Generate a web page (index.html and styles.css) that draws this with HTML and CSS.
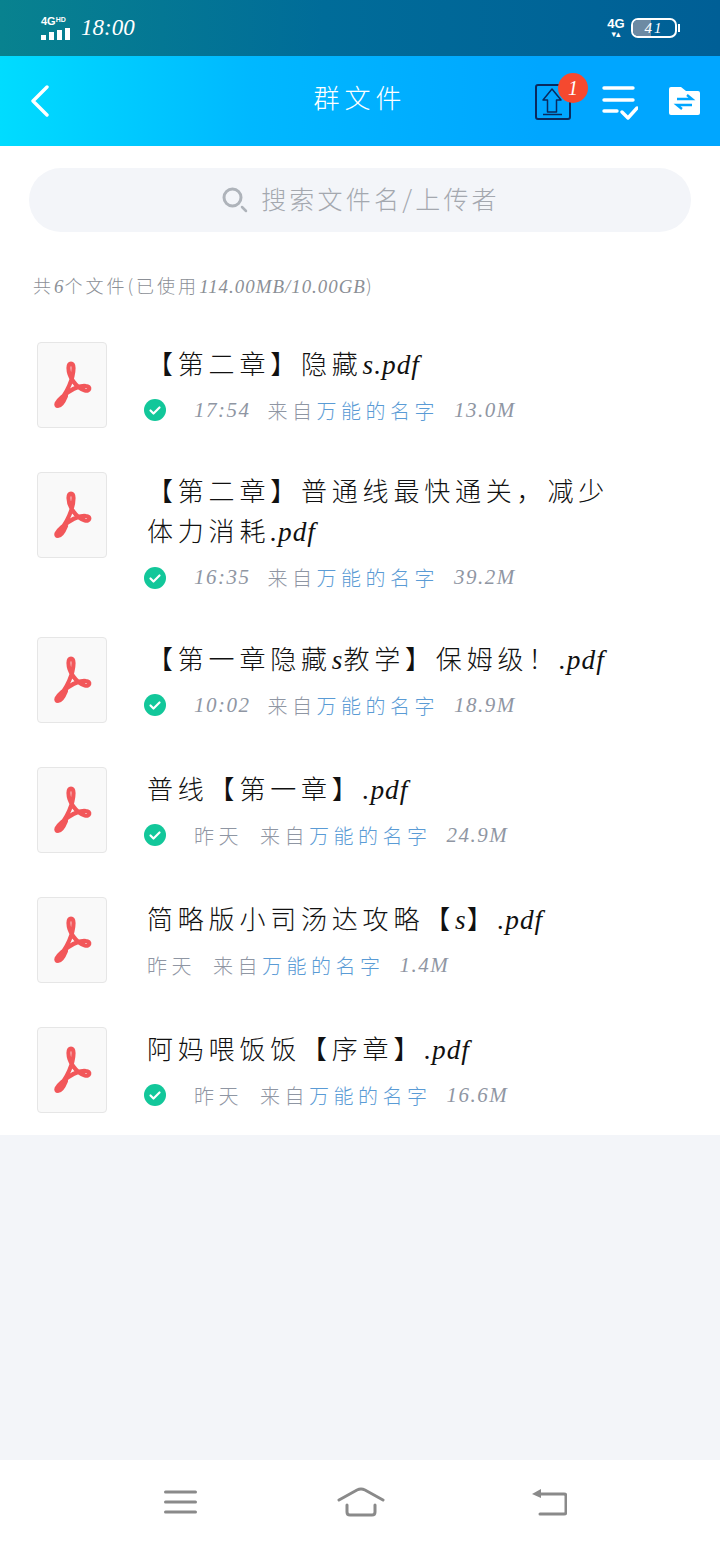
FILE: index.html
```html
<!DOCTYPE html>
<html lang="zh-CN">
<head>
    <meta charset="UTF-8">
    <meta name="viewport" content="width=device-width, initial-scale=1.0">
    <title>群文件</title>
    <link rel="stylesheet" href="styles.css">
</head>
<body>
    <svg class="defs" width="0" height="0">
        <symbol id="pdf" viewBox="0 0 40 50">
            <path d="M16.500 8C16.500 2 21.500 2 21.500 8C21.500 18 15 34 6 42M16.500 8C16.500 16 23 27 33 30.500C38 32 39 26 34 26C27 25 17 31 10 37C4 42 3 46 6 46C9 46 12 41 14 36" fill="none" stroke="#f2575a" stroke-width="4.200" stroke-linecap="round" stroke-linejoin="round"/>
        </symbol>
        <symbol id="ok" viewBox="0 0 22 22">
            <circle cx="11" cy="11" r="11" fill="#12c79a"/>
            <path d="M6.500 11.500l3 3 6-6" fill="none" stroke="#fff" stroke-width="2.200" stroke-linecap="round" stroke-linejoin="round"/>
        </symbol>
    </svg>

    <div class="status-bar">
        <div class="status-left">
            <div class="signal">
                <div class="net">4G<sup>HD</sup></div>
                <div class="bars"><i class="b1"></i><i class="b2"></i><i class="b3"></i><i class="b4"></i></div>
            </div>
            <span class="clock">18:00</span>
        </div>
        <div class="status-right">
            <div class="net-right">4G<span>▾▴</span></div>
            <div class="battery"><div class="level"></div><span>41</span></div>
            <div class="battery-tip"></div>
        </div>
    </div>

    <header class="topbar">
        <svg class="back" width="20" height="32" viewBox="0 0 20 32">
            <path d="M17 2L3 16l14 14" fill="none" stroke="#fff" stroke-width="3.400" stroke-linecap="round" stroke-linejoin="round"/>
        </svg>
        <h1>群文件</h1>
        <div class="actions">
            <div class="upload">
                <svg width="36" height="36" viewBox="0 0 36 36">
                    <rect x="1" y="1" width="34" height="34" rx="2" fill="none" stroke="#0a2a5e" stroke-width="2"/>
                    <path d="M17 5L8 16h4.500v12h9V16H26z" fill="none" stroke="#0a2a5e" stroke-width="1.500" stroke-linejoin="round"/>
                    <path d="M8 30.500h19" stroke="#0a2a5e" stroke-width="1.500"/>
                </svg>
                <span class="badge">1</span>
            </div>
            <svg class="todo" width="36" height="34" viewBox="0 0 36 34">
                <path d="M2 2h29M2 14h29M2 25h13" stroke="#fff" stroke-width="3.400" stroke-linecap="round"/>
                <path d="M20 26l6 6 9-10" fill="none" stroke="#fff" stroke-width="3.400" stroke-linecap="round" stroke-linejoin="round"/>
            </svg>
            <svg width="31" height="28" viewBox="0 0 31 28">
                <path d="M0 2a2 2 0 012-2h10l5 4h12a2 2 0 012 2v20a2 2 0 01-2 2H2a2 2 0 01-2-2z" fill="#fff"/>
                <path d="M8 12h15l-5-4M23 18H8l5 4" fill="none" stroke="#00a6ff" stroke-width="2.400"/>
            </svg>
        </div>
    </header>

    <main class="panel">
        <div class="search">
            <svg width="26" height="26" viewBox="0 0 26 26">
                <circle cx="10.500" cy="10.500" r="8.500" fill="none" stroke="#aeb3ba" stroke-width="3"/>
                <path d="M20 20l4 4" stroke="#aeb3ba" stroke-width="2.500" stroke-linecap="round"/>
            </svg>
            <span>搜索文件名/上传者</span>
        </div>
        <p class="count">共<span class="en">6</span>个文件(已使用<span class="en">114.00MB/10.00GB</span>)</p>

        <ul class="files">
            <li class="file">
                <div class="thumb"><svg width="40" height="50"><use href="#pdf"/></svg></div>
                <div class="info">
                    <div class="name">【第二章】隐藏<span class="en">s.pdf</span></div>
                    <div class="meta"><svg class="ok" width="22" height="22"><use href="#ok"/></svg><span class="when">17:54</span><span class="from">来自<b>万能的名字</b></span><span class="size">13.0M</span></div>
                </div>
            </li>
            <li class="file">
                <div class="thumb"><svg width="40" height="50"><use href="#pdf"/></svg></div>
                <div class="info">
                    <div class="name">【第二章】普通线最快通关，减少<br>体力消耗<span class="en">.pdf</span></div>
                    <div class="meta"><svg class="ok" width="22" height="22"><use href="#ok"/></svg><span class="when">16:35</span><span class="from">来自<b>万能的名字</b></span><span class="size">39.2M</span></div>
                </div>
            </li>
            <li class="file">
                <div class="thumb"><svg width="40" height="50"><use href="#pdf"/></svg></div>
                <div class="info">
                    <div class="name">【第一章隐藏<span class="en">s</span>教学】保姆级！<span class="en">.pdf</span></div>
                    <div class="meta"><svg class="ok" width="22" height="22"><use href="#ok"/></svg><span class="when">10:02</span><span class="from">来自<b>万能的名字</b></span><span class="size">18.9M</span></div>
                </div>
            </li>
            <li class="file">
                <div class="thumb"><svg width="40" height="50"><use href="#pdf"/></svg></div>
                <div class="info">
                    <div class="name">普线【第一章】<span class="en">.pdf</span></div>
                    <div class="meta"><svg class="ok" width="22" height="22"><use href="#ok"/></svg><span class="when cn">昨天</span><span class="from">来自<b>万能的名字</b></span><span class="size">24.9M</span></div>
                </div>
            </li>
            <li class="file">
                <div class="thumb"><svg width="40" height="50"><use href="#pdf"/></svg></div>
                <div class="info">
                    <div class="name">简略版小司汤达攻略【<span class="en">s</span>】<span class="en">.pdf</span></div>
                    <div class="meta"><span class="when cn">昨天</span><span class="from">来自<b>万能的名字</b></span><span class="size">1.4M</span></div>
                </div>
            </li>
            <li class="file">
                <div class="thumb"><svg width="40" height="50"><use href="#pdf"/></svg></div>
                <div class="info">
                    <div class="name">阿妈喂饭饭【序章】<span class="en">.pdf</span></div>
                    <div class="meta"><svg class="ok" width="22" height="22"><use href="#ok"/></svg><span class="when cn">昨天</span><span class="from">来自<b>万能的名字</b></span><span class="size">16.6M</span></div>
                </div>
            </li>
        </ul>
    </main>

    <div class="spacer"></div>

    <nav class="navbar">
        <svg width="33" height="24" viewBox="0 0 33 24">
            <path d="M1.500 2h30M1.500 12h30M1.500 22h30" stroke="#8a8a8a" stroke-width="3" stroke-linecap="round"/>
        </svg>
        <svg class="nav-home" width="48" height="30" viewBox="0 0 48 30">
            <path d="M2 13L20 3q4-2 8 0L46 13" fill="none" stroke="#8a8a8a" stroke-width="3" stroke-linecap="round"/>
            <path d="M10 18v7q0 3 3 3h22q3 0 3-3v-7" fill="none" stroke="#8a8a8a" stroke-width="3" stroke-linecap="round"/>
        </svg>
        <svg width="35" height="28" viewBox="0 0 35 28">
            <path d="M7 6h25q2 0 2 2v16q0 2-2 2H8" fill="none" stroke="#8a8a8a" stroke-width="3" stroke-linecap="round"/>
            <path d="M0 6l9-5v9z" fill="#8a8a8a"/>
        </svg>
    </nav>
</body>
</html>
```

FILE: styles.css
```css
* {
    box-sizing: border-box;
}
body {
    display: flex;
    flex-direction: column;
    width: 720px;
    height: 1544px;
    margin: 0;
    background-color: #f3f5f9;
    font-family: "Noto Sans CJK SC", "Noto Sans", sans-serif;
    font-weight: 300;
    overflow: hidden;
}
.defs {
    position: absolute;
}
.en {
    font-family: "Liberation Serif", serif;
    font-size: 1.05em;
    font-style: italic;
    line-height: 0;
    letter-spacing: 1px;
}

/* status bar */
.status-bar {
    display: flex;
    align-items: center;
    justify-content: space-between;
    height: 56px;
    padding: 0 40px 0 41px;
    background: linear-gradient(90deg, #08828f 0%, #006c99 45%, #005f96 100%);
    color: #fff;
}
.status-left {
    display: flex;
    align-items: center;
    gap: 11px;
}
.net {
    height: 11px;
    font: bold 11px/11px "Liberation Sans", sans-serif;
}
.net sup {
    font-size: 7px;
    line-height: 0;
    vertical-align: 3px;
}
.bars {
    display: flex;
    align-items: flex-end;
    gap: 3px;
    height: 12px;
    margin-top: 1px;
}
.bars i {
    display: block;
    width: 5px;
    background-color: #fff;
}
.b1 { height: 5px; }
.b2 { height: 8px; }
.b3 { height: 10px; }
.b4 { height: 12px; }
.clock {
    font: italic 23px "Liberation Serif", serif;
}
.status-right {
    display: flex;
    align-items: center;
}
.net-right {
    width: 18px;
    margin-right: 6px;
    font: bold 13px/12px "Liberation Sans", sans-serif;
    text-align: center;
}
.net-right span {
    display: block;
    font-family: "DejaVu Sans", sans-serif;
    font-size: 9px;
    line-height: 8px;
}
.battery {
    position: relative;
    width: 46px;
    height: 20px;
    border: 2px solid #fff;
    border-radius: 7px;
    overflow: hidden;
    font: italic 15px/16px "Liberation Serif", serif;
    text-align: center;
}
.battery .level {
    position: absolute;
    top: 0;
    left: 0;
    bottom: 0;
    width: 18px;
    background-color: #6d8aa3;
}
.battery span {
    position: relative;
    letter-spacing: 2px;
}
.battery-tip {
    width: 2px;
    height: 8px;
    margin-left: 1px;
    background-color: #fff;
}

/* header */
.topbar {
    position: relative;
    display: flex;
    align-items: center;
    height: 90px;
    padding: 0 20px 0 30px;
    background: linear-gradient(90deg, #00dcff 0%, #00b8ff 35%, #00a6ff 75%);
}
.topbar h1 {
    position: absolute;
    left: 0;
    right: 0;
    margin: 0 0 9px;
    color: #fff;
    font-size: 26px;
    font-weight: 300;
    letter-spacing: 5px;
    text-align: center;
}
.actions {
    display: flex;
    align-items: center;
    gap: 31px;
    margin-left: auto;
}
.upload {
    position: relative;
    display: flex;
    margin-top: 1px;
}
.badge {
    position: absolute;
    top: -11px;
    right: -17px;
    width: 30px;
    height: 30px;
    border-radius: 50%;
    background-color: #f5492f;
    color: #fff;
    font: italic 20px/30px "Liberation Serif", serif;
    text-align: center;
}
.todo {
    margin-top: 3px;
}

/* search and list */
.panel {
    padding: 22px 0 22px;
    background-color: #fff;
}
.search {
    display: flex;
    align-items: center;
    justify-content: center;
    gap: 13px;
    height: 64px;
    margin: 0 29px;
    padding: 0 0 5px 2px;
    border-radius: 32px;
    background-color: #f3f5f9;
    color: #a4a8af;
    font-size: 25px;
    letter-spacing: 3.200px;
}
.search svg {
    margin-top: 5px;
}
.count {
    margin: 38px 33px 42px;
    color: #8b8f96;
    font-size: 18px;
    line-height: 30px;
    letter-spacing: 3px;
    white-space: nowrap;
}
.files {
    display: flex;
    flex-direction: column;
    gap: 44px;
    margin: 0;
    padding: 0 0 0 37px;
    list-style: none;
}
.file {
    display: flex;
    align-items: flex-start;
}
.thumb {
    display: flex;
    flex: none;
    align-items: center;
    justify-content: center;
    width: 70px;
    height: 86px;
    border: 1px solid #e6e6e6;
    border-radius: 4px;
    background-color: #f9f9f9;
}
.info {
    align-self: center;
    margin-left: 40px;
}
.name {
    margin-top: -2px;
    color: #111;
    font-size: 26px;
    line-height: 40px;
    letter-spacing: 4.800px;
    white-space: nowrap;
}
.meta {
    display: flex;
    align-items: center;
    height: 31px;
    margin-top: 12px;
    color: #8f96a3;
    font-size: 20px;
    letter-spacing: 4.500px;
    white-space: nowrap;
}
.ok {
    flex: none;
    margin-right: 28px;
    margin-left: -3px;
}
.when,
.size {
    font-family: "Liberation Serif", serif;
    font-size: 21px;
    font-style: italic;
    letter-spacing: 1.500px;
}
.when.cn {
    font-family: inherit;
    font-size: 20px;
    font-style: normal;
    letter-spacing: 4.500px;
}
.from {
    margin: 0 15px 0 17px;
}
.from b {
    color: #5a9bd5;
    font-weight: 300;
}

.spacer {
    flex: 1;
}
.navbar {
    display: flex;
    align-items: center;
    gap: 140px;
    height: 84px;
    padding-left: 164px;
    background-color: #fff;
}
.nav-home {
    margin-right: 7px;
}
```
